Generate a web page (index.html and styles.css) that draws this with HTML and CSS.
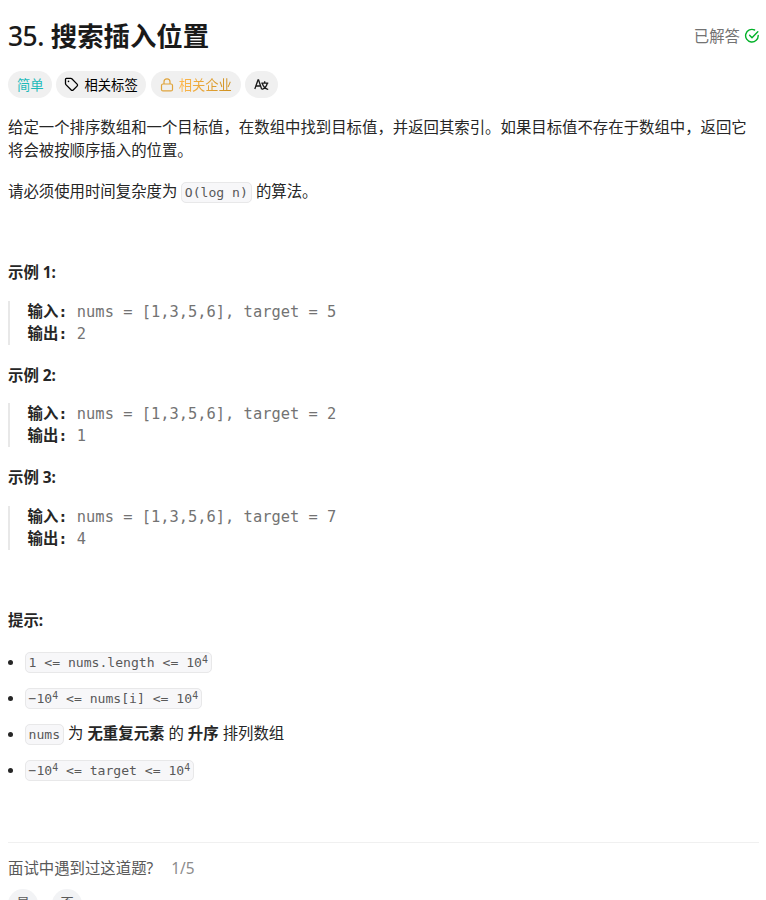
FILE: index.html
```html
<!DOCTYPE html>
<html lang="zh-CN">
    <head>
        <meta charset="UTF-8">
        <meta name="viewport" content="width=device-width, initial-scale=1.0">
        <title>35. 搜索插入位置</title>
        <link rel="stylesheet" href="styles.css">
    </head>
    <body>
        <div class="header">
            <h1><span class="number">35.</span> 搜索插入位置</h1>
            <div class="solved">
                已解答
                <svg width="16" height="16" viewBox="0 0 16 16" fill="none" stroke="currentColor" stroke-width="1.4" stroke-linecap="round" stroke-linejoin="round">
                    <path d="M10.6 2A6.3 6.3 0 1 0 14.2 7.4"/>
                    <path d="M5.6 7.3l2.4 2.4 5.8-5.9"/>
                </svg>
            </div>
        </div>
        <div class="tags">
            <span class="tag easy">简单</span>
            <span class="tag topics">
                <svg width="15" height="15" viewBox="0 0 15 15" fill="none" stroke="currentColor" stroke-width="1.3" stroke-linejoin="round">
                    <path d="M1.5 2.3v4.3c0 .4.1.7.4 1l5.3 5.4c.6.6 1.4.6 2 0l3.9-3.9c.6-.6.6-1.4 0-2L7.8 1.8c-.3-.3-.6-.4-1-.4H2.4c-.5 0-.9.4-.9.9z"/>
                    <circle cx="4.5" cy="4.4" r=".8" fill="currentColor" stroke="none"/>
                </svg>
                相关标签
            </span>
            <span class="tag companies">
                <svg width="14" height="14" viewBox="0 0 14 14" fill="none" stroke="currentColor" stroke-width="1.2" stroke-linejoin="round">
                    <rect x="1.5" y="6" width="11" height="6.9" rx="1.5"/>
                    <path d="M4 6V3.8a3 3 0 0 1 6 0V6"/>
                </svg>
                <span class="gold">相关企业</span>
            </span>
            <span class="tag translate">
                <svg width="15" height="15" viewBox="0 0 15 15" fill="none" stroke="currentColor" stroke-width="1.3">
                    <path d="M.8 12L4 3h.6l3 9M2 9h4.6"/>
                    <path d="M7.3 6.1h7M10.7 4.3v1.8M8.3 6.500c.8 2.700 2.700 5 5.900 6M13.200 6.500c-.7 2.900-2.600 5-5.600 6"/>
                </svg>
            </span>
        </div>
        <div class="content">
            <p>给定一个排序数组和一个目标值，在数组中找到目标值，并返回其索引。如果目标值不存在于数组中，返回它将会被按顺序插入的位置。</p>
            <p>请必须使用时间复杂度为 <code>O(log n)</code> 的算法。</p>
            <p>&nbsp;</p>
            <p><strong>示例 1:</strong></p>
            <pre><strong>输入: </strong>nums = [1,3,5,6], target = 5
<strong>输出: </strong>2</pre>
            <p><strong>示例 2:</strong></p>
            <pre><strong>输入: </strong>nums = [1,3,5,6], target = 2
<strong>输出: </strong>1</pre>
            <p><strong>示例 3:</strong></p>
            <pre><strong>输入: </strong>nums = [1,3,5,6], target = 7
<strong>输出: </strong>4</pre>
            <p>&nbsp;</p>
            <p><strong>提示:</strong></p>
            <ul>
                <li><code>1 &lt;= nums.length &lt;= 10<sup>4</sup></code></li>
                <li><code>−10<sup>4</sup> &lt;= nums[i] &lt;= 10<sup>4</sup></code></li>
                <li><code>nums</code> 为 <strong>无重复元素</strong> 的 <strong>升序</strong> 排列数组</li>
                <li><code>−10<sup>4</sup> &lt;= target &lt;= 10<sup>4</sup></code></li>
            </ul>
        </div>
        <div class="survey">
            <div class="question">面试中遇到过这道题? <span class="step">1/5</span></div>
            <div class="answers">
                <button>是</button>
                <button>否</button>
            </div>
        </div>
    </body>
</html>
```
FILE: styles.css
```css
* {
    box-sizing: border-box;
}

html {
    overflow: hidden;
}

body {
    margin: 0;
    height: 900px;
    overflow: hidden;
    padding: 19px 7px 0 8px;
    font-family: "Noto Sans", "Noto Sans CJK SC", sans-serif;
    font-size: 15.4px;
    line-height: 23.1px;
    color: #262626;
    background: #fff;
}

.header {
    display: flex;
    justify-content: space-between;
    align-items: center;
    height: 35px;
}

h1 {
    margin: 0;
    font-size: 26.4px;
    font-weight: 600;
    line-height: 35px;
    color: #1a1a1a;
}

.number {
    font-weight: 500;
    letter-spacing: -.5px;
}

.solved {
    display: flex;
    align-items: center;
    gap: 4px;
    margin-right: -1px;
    padding-top: 1px;
    color: #737373;
}

.solved svg {
    margin-top: -2px;
    color: #02b128;
}

.tags {
    display: flex;
    gap: 4px;
    margin-top: 17px;
}

.tag {
    display: flex;
    align-items: center;
    height: 27px;
    padding: 2px 9px 0;
    border-radius: 14px;
    background: #f0f0f0;
    color: #1a1a1a;
    font-size: 13.3px;
    white-space: nowrap;
}

.tag svg {
    margin-top: -2px;
}

.easy {
    width: 44px;
    color: #1cbaba;
}

.topics {
    gap: 5.5px;
    padding: 2px 8px 0;
    color: #000;
}

.companies {
    gap: 5px;
    margin-left: 1px;
    color: #e0a43c;
}

.gold {
    background: linear-gradient(90deg, #ffb84d, #cc8f1f);
    -webkit-background-clip: text;
    background-clip: text;
    color: transparent;
}

.content {
    margin-top: 18px;
}

p {
    margin: 0 0 17.6px;
}

code {
    padding: 2px 3px 2px 2.5px;
    border: 1px solid #e8e8e9;
    border-radius: 5px;
    background: #f7f7f9;
    color: #595959;
    font-family: "DejaVu Sans Mono", monospace;
    font-size: 13.1px;
    line-height: 1;
    white-space: nowrap;
}

pre {
    margin: -.9px 0 18.7px;
    padding-left: 17.5px;
    border-left: 2px solid #e8e8e8;
    color: #737373;
    font-family: "DejaVu Sans Mono", "Noto Sans CJK SC", monospace;
    font-size: 15.4px;
    line-height: 22px;
}

pre strong {
    color: #262626;
}

sup {
    position: relative;
    top: -4px;
    font-size: 9.9px;
    line-height: 0;
    vertical-align: baseline;
}

ul {
    margin: 17.6px 0 0;
    padding: 0 0 0 17px;
}

li {
    margin-bottom: 13px;
}

.survey {
    margin-top: 60.8px;
    border-top: 1px solid #f0f0f0;
}

.question {
    margin-top: 14px;
    color: #595959;
}

.step {
    margin-left: 14px;
    color: #8c8c8c;
}

.answers {
    display: flex;
    gap: 14px;
    margin-top: 9px;
}

button {
    width: 30px;
    height: 30px;
    padding: 0 0 3px;
    border: none;
    border-radius: 15px;
    background: #f2f3f5;
    color: #595959;
    font-family: inherit;
    font-size: 13.2px;
}
```
